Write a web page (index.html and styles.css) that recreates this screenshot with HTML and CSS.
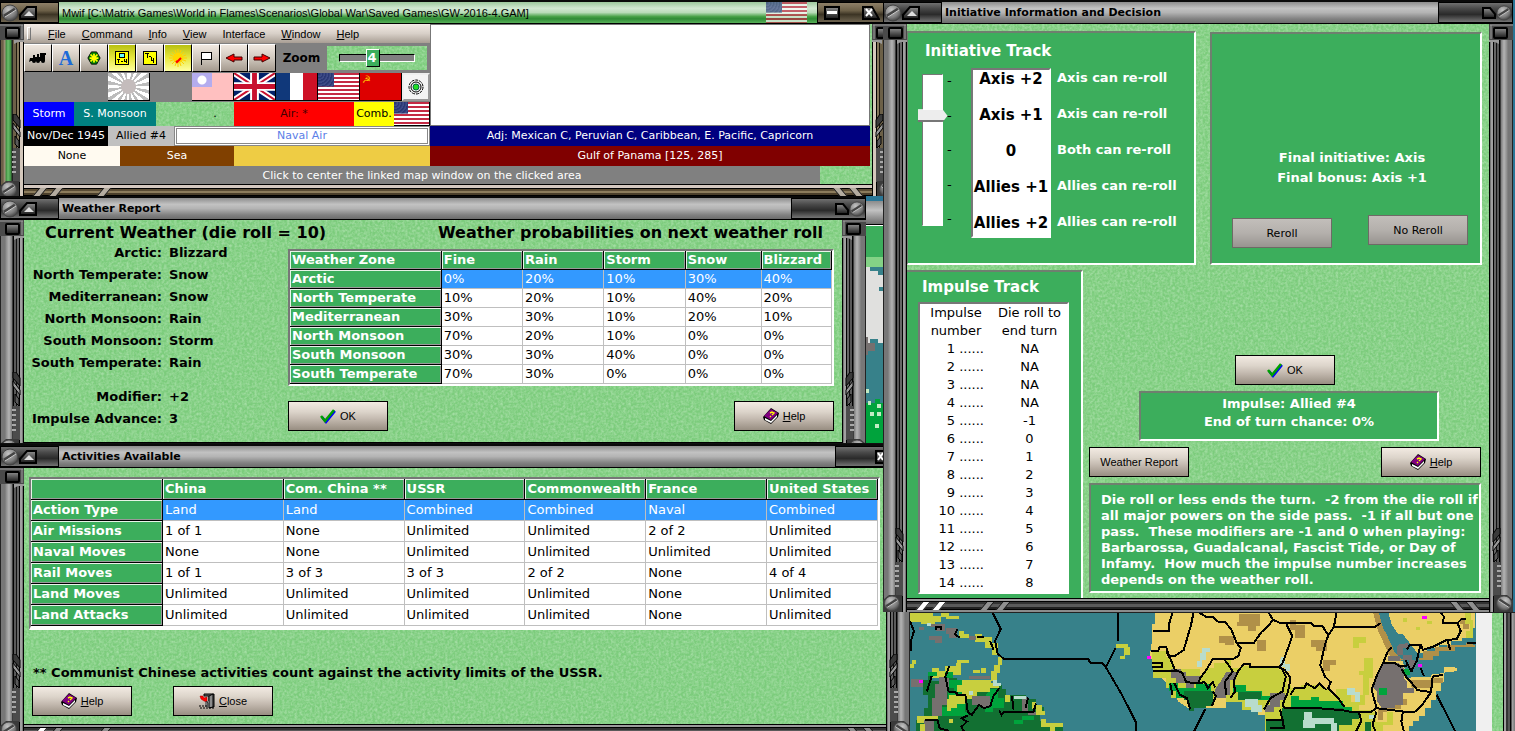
FILE: index.html
```html
<!DOCTYPE html>
<html lang="en">
<head>
    <meta charset="UTF-8">
    <meta name="viewport" content="width=device-width, initial-scale=1.0">
    <title>Mwif</title>
    <link rel="stylesheet" href="styles.css">
</head>
<body>
    <!-- shared shapes -->
    <svg class="defs" width="0" height="0" aria-hidden="true">
        <defs>
            <radialGradient id="screwFill" cx="0.4" cy="0.3" r="0.8">
                <stop offset="0" stop-color="#c4c4c4"/>
                <stop offset="0.6" stop-color="#7c7c7c"/>
                <stop offset="1" stop-color="#2c2c2c"/>
            </radialGradient>
            <linearGradient id="knobFill" x1="0" y1="0" x2="0" y2="1">
                <stop offset="0" stop-color="#909090"/>
                <stop offset="1" stop-color="#181818"/>
            </linearGradient>
        </defs>
        <symbol id="screw" viewBox="0 0 18 18">
            <circle cx="9" cy="9" r="8" fill="url(#screwFill)" stroke="#444"/>
            <path d="M3 12 L14 5" stroke="#444" stroke-width="3"/>
            <path d="M4 13 L15 6" stroke="#ccc" stroke-width="1"/>
        </symbol>
        <symbol id="tri" viewBox="0 0 18 14">
            <path d="M1 13 V9 L8 1 H17 V13 Z" fill="url(#knobFill)" stroke="#000" stroke-width="2"/>
            <path d="M5 10 L10 5 L15 10 Z" fill="#ddd"/>
        </symbol>
        <symbol id="railtop" viewBox="0 0 24 20">
            <rect width="24" height="16" fill="#4a4a4a"/>
            <path d="M0 1 H23 M22 1 V15" stroke="#a0a0a0" stroke-width="1"/>
            <rect x="6" y="4" width="13" height="10" rx="1" fill="url(#knobFill)" stroke="#000" stroke-width="2"/>
            <path d="M14 16 H24 V18 H18 L14 20 Z" fill="#9a9a9a"/>
        </symbol>
        <symbol id="railend" viewBox="0 0 24 84">
            <path d="M13 0 L16 0 L20 6 V14 L13 6 Z" fill="#3a3a3a" stroke="#000"/>
            <path d="M13 9 L20 18 V23 L13 14 Z" fill="#989898" stroke="#000"/>
            <path d="M15 22 L19 27 V34 L15 30 Z" fill="#5a5a5a" stroke="#000"/>
            <rect x="13" y="34" width="7" height="34" fill="#4c4c4c"/>
            <path d="M12 38 H16 M12 43 H16 M12 48 H16 M12 53 H16 M12 58 H16" stroke="#a8a8a8" stroke-width="2"/>
            <path d="M6 67 H19 V84 H0 V72 Z" fill="#3a3a3a"/>
            <use href="#screw" x="0" y="67" width="18" height="17"/>
        </symbol>
        <symbol id="book" viewBox="0 0 16 16">
            <path d="M0 9 L8 0 L16 5 L15 9 L8 16 L1 12 Z" fill="#000"/>
            <path d="M1 8 L8 1 L15 5 L8 12 Z" fill="#800080"/>
            <path d="M2 10 L8 13 L14 7 V9 L8 15 L2 12 Z" fill="#fff"/>
            <path d="M7 5 L9 4 L11 5 L9 7 M8 8 L7 9" stroke="#ff0" stroke-width="1.4" fill="none"/>
        </symbol>
        <symbol id="check" viewBox="0 0 16 16">
            <path d="M2 9 L6 14 L15 3" stroke="#00f" stroke-width="2.4" fill="none"/>
            <path d="M1 8 L5 13 L14 2" stroke="#00a000" stroke-width="2.6" fill="none"/>
        </symbol>
        <symbol id="door" viewBox="0 0 16 16">
            <path d="M5 1 H15 V14 H10 V3 H5 Z" fill="#666" stroke="#000"/>
            <path d="M10 3 L14 1 V14 L10 15 Z" fill="#8c8c8c" stroke="#000"/>
            <path d="M6 8 H10 V14 H6 Z" fill="#777"/>
            <path d="M1 3 L4 3 L5 5 L8 4 L8 9 L5 8 L2 6 Z" fill="#f00" stroke="#900" stroke-width="0.5"/>
            <path d="M7 8 L9 10 V14" stroke="#333" fill="none"/>
            <path d="M0 13 H9 M1 15 H16" stroke="#000" stroke-dasharray="2 1"/>
        </symbol>
    </svg>

    <main class="desktop">
        <div class="left-side">

            <!-- main game window -->
            <section class="window mwif">
                <header class="titlebar">
                    <div class="title-left">
                        <svg width="18" height="18"><use href="#screw"/></svg>
                        <svg width="18" height="14"><use href="#tri"/></svg>
                    </div>
                    <h1>Mwif [C:\Matrix Games\World in Flames\Scenarios\Global War\Saved Games\GW-2016-4.GAM]</h1>
                    <span class="flag us title-flag"></span>
                    <div class="title-right main-buttons">
                        <button class="knob" aria-label="Minimize"><svg width="16" height="14" viewBox="0 0 16 14"><rect x="1" y="1" width="14" height="12" fill="url(#knobFill)" stroke="#000" stroke-width="2"/><rect x="3" y="5" width="10" height="3" fill="#fff"/></svg></button>
                        <button class="knob" aria-label="Close"><svg width="18" height="14" viewBox="0 0 18 14"><path d="M1 1 H10 L17 13 H1 Z" fill="url(#knobFill)" stroke="#000" stroke-width="2"/><path d="M4 3 L10 10 M10 3 L4 10" stroke="#fff" stroke-width="2"/></svg></button>
                    </div>
                </header>
                <div class="window-body">
                    <div class="rail"><svg width="24" height="20"><use href="#railtop"/></svg><svg width="24" height="84"><use href="#railend"/></svg></div>
                    <div class="middle">
                        <div class="content">
                            <div class="top-area">
                                <div class="controls">
                                    <nav class="menu">
                                        <span class="grip"></span>
                                        <a href="#"><u>F</u>ile</a>
                                        <a href="#"><u>C</u>ommand</a>
                                        <a href="#"><u>I</u>nfo</a>
                                        <a href="#"><u>V</u>iew</a>
                                        <a href="#">Interface</a>
                                        <a href="#"><u>W</u>indow</a>
                                        <a href="#"><u>H</u>elp</a>
                                    </nav>
                                    <div class="toolbar">
                                        <button class="tool" aria-label="Rail"><svg width="18" height="16" viewBox="0 0 18 16"><path d="M1 8 H4 V5 H6 V7 H8 V4 H10 V7 H11 V3 H17 V5 H16 V11 H2 L0 12 Z"/><circle cx="5" cy="11" r="2"/><circle cx="9" cy="11" r="2"/><circle cx="14" cy="11" r="2"/></svg></button>
                                        <button class="tool letter" aria-label="Names">A</button>
                                        <button class="tool" aria-label="Hexes"><svg width="14" height="14" viewBox="0 0 16 16"><path d="M5 1 H11 L15 8 L11 15 H5 L1 8 Z" fill="#008000" stroke="#000"/><path d="M8 3 V13 M3 8 H13 M4 4 L12 12 M12 4 L4 12" stroke="#ff0" stroke-width="2"/></svg></button>
                                        <button class="tool on" aria-label="Unit numbers"><svg width="14" height="14" viewBox="0 0 14 14" shape-rendering="crispEdges"><rect x="0" y="0" width="14" height="14" fill="#000"/><rect x="1" y="1" width="12" height="12" fill="#ff0"/><rect x="4" y="2" width="6" height="5" fill="#000"/><rect x="5" y="3" width="4" height="3" fill="#6ff"/><path d="M2 8 H5 V9 H4 V12 H3 V9 H2 Z M6 10 H8 V11 H6 Z M9 8 H10 V10 H11 V8 H12 V12 H11 V11 H9 Z"/></svg></button>
                                        <button class="tool" aria-label="Factors"><svg width="14" height="14" viewBox="0 0 14 14" shape-rendering="crispEdges"><rect width="14" height="14" fill="#000"/><rect x="1" y="1" width="12" height="12" fill="#ff0"/><path d="M2 2 H6 V3 H5 V7 H4 V3 H2 Z M6 5 H8 V6 H6 Z M8 6 H9 V9 H10 V7 H11 V12 H10 V10 H8 Z"/></svg></button>
                                        <button class="tool on" aria-label="Weather"><svg width="20" height="20" viewBox="0 0 20 20"><path d="M10 1 V19 M1 10 H19 M4 4 L16 16 M16 4 L4 16 M7 2 L13 18 M13 2 L7 18 M2 7 L18 13 M18 7 L2 13" stroke="#ffd000"/><circle cx="10" cy="10" r="5" fill="#ffd800"/><path d="M8 13 L9 14 L13 10" stroke="#f00" stroke-width="2" fill="none"/></svg></button>
                                        <button class="tool" aria-label="Flag"><svg width="16" height="16" viewBox="0 0 16 16" shape-rendering="crispEdges"><path d="M3 15 V2 H13 V9 H3" fill="#fff" stroke="#000"/></svg></button>
                                        <button class="tool" aria-label="Back"><svg width="18" height="12" viewBox="0 0 18 12"><path d="M1 6 L9 2 V5 H17 V8 H9 V10 Z" fill="#f00" stroke="#400"/></svg></button>
                                        <button class="tool" aria-label="Forward"><svg width="18" height="12" viewBox="0 0 18 12"><path d="M17 6 L9 2 V5 H1 V8 H9 V10 Z" fill="#f00" stroke="#400"/></svg></button>
                                        <label class="zoom-label" for="zoom">Zoom</label>
                                        <div class="zoom-box">
                                            <input type="range" id="zoom" class="zoom" min="1" max="8" value="4">
                                            <output class="zoom-value" for="zoom">4</output>
                                        </div>
                                    </div>
                                    <div class="flags">
                                        <span></span>
                                        <span></span>
                                        <span class="flag japan"></span>
                                        <span></span>
                                        <span class="flag china"></span>
                                        <svg class="flag" viewBox="0 0 42 28" preserveAspectRatio="none">
                                            <rect width="42" height="28" fill="#012169"/>
                                            <path d="M0 0 L42 28 M42 0 L0 28" stroke="#fff" stroke-width="6"/>
                                            <path d="M0 0 L42 28 M42 0 L0 28" stroke="#c8102e" stroke-width="2"/>
                                            <path d="M21 0 V28 M0 14 H42" stroke="#fff" stroke-width="9"/>
                                            <path d="M21 0 V28 M0 14 H42" stroke="#c8102e" stroke-width="5"/>
                                        </svg>
                                        <span class="flag france"></span>
                                        <span class="flag us"></span>
                                        <span class="flag ussr">☭</span>
                                        <button class="target" aria-label="Target"><svg width="18" height="18" viewBox="0 0 18 18" fill="none" stroke="#000"><circle cx="9" cy="9" r="7" stroke-dasharray="3 1"/><circle cx="9" cy="9" r="5"/><circle cx="9" cy="9" r="3" fill="#2d2" stroke="#064"/></svg></button>
                                    </div>
                                    <div class="info-row tall">
                                        <span class="storm">Storm</span>
                                        <span class="monsoon">S. Monsoon</span>
                                        <span class="dot">.</span>
                                        <span class="air">Air: *</span>
                                        <span class="comb">Comb.</span>
                                        <span class="flag us small"></span>
                                    </div>
                                </div>
                                <div class="overview"></div>
                            </div>
                            <div class="info-row">
                                <div class="info-left">
                                    <span class="date">Nov/Dec 1945</span>
                                    <span class="side">Allied #4</span>
                                    <input class="phase" type="text" value="Naval Air" aria-label="Phase" readonly>
                                </div>
                                <span class="adjacent">Adj: Mexican C, Peruvian C, Caribbean, E. Pacific, Capricorn</span>
                            </div>
                            <div class="info-row">
                                <div class="info-left">
                                    <span class="none">None</span>
                                    <span class="sea">Sea</span>
                                    <span class="sand"></span>
                                </div>
                                <span class="place">Gulf of Panama [125, 285]</span>
                            </div>
                            <div class="status">Click to center the linked map window on the clicked area</div>
                        </div>
                        <div class="bottom-bar"><i></i><i></i><i></i><i class="end"></i><i></i></div>
                    </div>
                    <div class="rail right"><svg width="24" height="20"><use href="#railtop"/></svg><svg width="24" height="84"><use href="#railend"/></svg></div>
                </div>
            </section>

            <!-- weather report -->
            <div class="weather-row">
                <section class="window weather">
                    <header class="titlebar">
                        <div class="title-left">
                            <svg width="18" height="18"><use href="#screw"/></svg>
                            <svg width="18" height="14"><use href="#tri"/></svg>
                        </div>
                        <h2>Weather Report</h2>
                        <div class="title-right">
                            <svg width="14" height="12" viewBox="0 0 14 12"><path d="M1 1 H8 L13 7 V11 H1 Z" fill="url(#knobFill)" stroke="#000" stroke-width="2"/></svg>
                            <svg width="16" height="16"><use href="#screw"/></svg>
                        </div>
                    </header>
                    <div class="window-body">
                        <div class="rail"><svg width="24" height="20"><use href="#railtop"/></svg><svg width="24" height="84"><use href="#railend"/></svg></div>
                        <div class="middle">
                            <div class="content weather-content">
                                <div class="current">
                                    <h3>Current Weather (die roll = 10)</h3>
                                    <dl>
                                        <dt>Arctic:</dt><dd>Blizzard</dd>
                                        <dt>North Temperate:</dt><dd>Snow</dd>
                                        <dt>Mediterranean:</dt><dd>Snow</dd>
                                        <dt>North Monsoon:</dt><dd>Rain</dd>
                                        <dt>South Monsoon:</dt><dd>Storm</dd>
                                        <dt>South Temperate:</dt><dd>Rain</dd>
                                    </dl>
                                    <dl>
                                        <dt>Modifier:</dt><dd>+2</dd>
                                        <dt>Impulse Advance:</dt><dd>3</dd>
                                    </dl>
                                </div>
                                <div class="probabilities">
                                    <h3>Weather probabilities on next weather roll</h3>
                                    <table class="grid-table weather-table">
                                        <thead>
                                            <tr><th class="zone">Weather Zone</th><th class="wide">Fine</th><th class="wide">Rain</th><th class="wide">Storm</th><th class="medium">Snow</th><th>Blizzard</th></tr>
                                        </thead>
                                        <tbody>
                                            <tr class="selected"><th>Arctic</th><td>0%</td><td>20%</td><td>10%</td><td>30%</td><td>40%</td></tr>
                                            <tr><th>North Temperate</th><td>10%</td><td>20%</td><td>10%</td><td>40%</td><td>20%</td></tr>
                                            <tr><th>Mediterranean</th><td>30%</td><td>30%</td><td>10%</td><td>20%</td><td>10%</td></tr>
                                            <tr><th>North Monsoon</th><td>70%</td><td>20%</td><td>10%</td><td>0%</td><td>0%</td></tr>
                                            <tr><th>South Monsoon</th><td>30%</td><td>30%</td><td>40%</td><td>0%</td><td>0%</td></tr>
                                            <tr><th>South Temperate</th><td>70%</td><td>30%</td><td>0%</td><td>0%</td><td>0%</td></tr>
                                        </tbody>
                                    </table>
                                    <div class="button-row">
                                        <button class="btn"><svg width="16" height="16"><use href="#check"/></svg>OK</button>
                                        <button class="btn"><svg width="16" height="16"><use href="#book"/></svg><span><u>H</u>elp</span></button>
                                    </div>
                                </div>
                            </div>
                            <div class="bottom-bar"><i></i><i></i><i></i><i class="end"></i><i></i></div>
                        </div>
                        <div class="rail right"><svg width="24" height="20"><use href="#railtop"/></svg><svg width="24" height="84"><use href="#railend"/></svg></div>
                    </div>
                </section>
                <div class="behind">
                    <div class="behind-title"></div>
                    <div class="behind-panel"></div>
                    <svg class="behind-map" viewBox="0 0 17 176" preserveAspectRatio="none" shape-rendering="crispEdges">
                        <rect width="17" height="176" fill="#37818a"/>
                        <path d="M0 0 H4 V4 H12 V8 H17 V76 H12 V72 H4 V76 H0 Z" fill="#e0e0de"/>
                        <path d="M13 20 H17 V24 H13 Z" fill="#37818a"/>
                        <path d="M0 70 H2 V76 H9 V84 H2 V88 H0 Z" fill="#76706f"/>
                        <path d="M0 136 H9 V132 H14 V136 H17 V176 H0 Z" fill="#00a33c"/>
                        <path d="M0 122 H3 V126 H0 Z M2 134 H5 V138 H2 Z M4 145 H8 V149 H4 Z M11 137 H15 V141 H11 Z M11 145 H15 V149 H11 Z M9 157 H13 V161 H9 Z" fill="#c4ecc4"/>
                    </svg>
                </div>
            </div>

            <!-- activities -->
            <section class="window activities">
                <header class="titlebar">
                    <div class="title-left">
                        <svg width="18" height="18"><use href="#screw"/></svg>
                        <svg width="18" height="14"><use href="#tri"/></svg>
                    </div>
                    <h2>Activities Available</h2>
                    <div class="title-right act-buttons">
                        <button class="knob" aria-label="Close"><svg width="18" height="14" viewBox="0 0 18 14"><path d="M1 1 H10 L17 13 H1 Z" fill="url(#knobFill)" stroke="#000" stroke-width="2"/><path d="M3 3 L8 10 M8 3 L3 10" stroke="#fff" stroke-width="2"/></svg></button>
                    </div>
                </header>
                <div class="window-body">
                    <div class="rail"><svg width="24" height="20"><use href="#railtop"/></svg><svg width="24" height="84"><use href="#railend"/></svg></div>
                    <div class="middle">
                        <div class="content activities-content">
                            <table class="grid-table activities-table">
                                <thead>
                                    <tr><th class="zone"></th><th>China</th><th>Com. China **</th><th>USSR</th><th>Commonwealth</th><th>France</th><th class="last">United States</th></tr>
                                </thead>
                                <tbody>
                                    <tr class="selected"><th>Action Type</th><td>Land</td><td>Land</td><td>Combined</td><td>Combined</td><td>Naval</td><td>Combined</td></tr>
                                    <tr><th>Air Missions</th><td>1 of 1</td><td>None</td><td>Unlimited</td><td>Unlimited</td><td>2 of 2</td><td>Unlimited</td></tr>
                                    <tr><th>Naval Moves</th><td>None</td><td>None</td><td>Unlimited</td><td>Unlimited</td><td>Unlimited</td><td>Unlimited</td></tr>
                                    <tr><th>Rail Moves</th><td>1 of 1</td><td>3 of 3</td><td>3 of 3</td><td>2 of 2</td><td>None</td><td>4 of 4</td></tr>
                                    <tr><th>Land Moves</th><td>Unlimited</td><td>Unlimited</td><td>Unlimited</td><td>Unlimited</td><td>None</td><td>Unlimited</td></tr>
                                    <tr><th>Land Attacks</th><td>Unlimited</td><td>Unlimited</td><td>Unlimited</td><td>Unlimited</td><td>None</td><td>Unlimited</td></tr>
                                </tbody>
                            </table>
                            <p class="note">** Communist Chinese activities count against the activity limits of the USSR.</p>
                            <div class="button-row">
                                <button class="btn"><svg width="16" height="16"><use href="#book"/></svg><span><u>H</u>elp</span></button>
                                <button class="btn"><svg width="16" height="16"><use href="#door"/></svg><span><u>C</u>lose</span></button>
                            </div>
                        </div>
                        <div class="bottom-bar"><i class="white"></i><i></i><i></i><i class="end"></i><i></i></div>
                    </div>
                    <div class="rail right"><svg width="24" height="20"><use href="#railtop"/></svg><svg width="24" height="84"><use href="#railend"/></svg></div>
                </div>
            </section>
        </div>

        <div class="right-side">
            <!-- initiative -->
            <section class="window initiative">
                <header class="titlebar">
                    <div class="title-left">
                        <svg width="18" height="18"><use href="#screw"/></svg>
                        <svg width="18" height="14"><use href="#tri"/></svg>
                    </div>
                    <h2>Initiative Information and Decision</h2>
                    <div class="title-right">
                        <svg width="14" height="12" viewBox="0 0 14 12"><path d="M1 1 H8 L13 7 V11 H1 Z" fill="url(#knobFill)" stroke="#000" stroke-width="2"/></svg>
                        <svg width="16" height="16"><use href="#screw"/></svg>
                    </div>
                </header>
                <div class="window-body">
                    <div class="rail"><svg width="24" height="20"><use href="#railtop"/></svg><svg width="24" height="84"><use href="#railend"/></svg></div>
                    <div class="middle">
                        <div class="content initiative-content">
                            <div class="tracks">
                                <div class="panel initiative-track">
                                    <h3><label for="initiative">Initiative Track</label></h3>
                                    <div class="track">
                                        <input type="range" id="initiative" class="initiative-slider" min="0" max="4" value="1">
                                        <div class="ticks"><span>-</span><span>-</span><span>-</span><span>-</span><span>-</span></div>
                                        <ul class="levels">
                                            <li>Axis +2</li>
                                            <li>Axis +1</li>
                                            <li>0</li>
                                            <li>Allies +1</li>
                                            <li>Allies +2</li>
                                        </ul>
                                        <ul class="meanings">
                                            <li>Axis can re-roll</li>
                                            <li>Axis can re-roll</li>
                                            <li>Both can re-roll</li>
                                            <li>Allies can re-roll</li>
                                            <li>Allies can re-roll</li>
                                        </ul>
                                    </div>
                                </div>
                                <div class="panel final">
                                    <p>Final initiative: Axis<br>Final bonus: Axis +1</p>
                                    <div class="reroll-row">
                                        <button class="btn off" disabled>Reroll</button>
                                        <button class="btn off" disabled>No Reroll</button>
                                    </div>
                                </div>
                            </div>
                            <div class="lower">
                                <div class="panel impulse-track">
                                    <h3>Impulse Track</h3>
                                    <table class="impulses">
                                        <thead>
                                            <tr><th>Impulse<br>number</th><th>Die roll to<br>end turn</th></tr>
                                        </thead>
                                        <tbody>
                                            <tr><td>1 ......</td><td>NA</td></tr>
                                            <tr><td>2 ......</td><td>NA</td></tr>
                                            <tr><td>3 ......</td><td>NA</td></tr>
                                            <tr><td>4 ......</td><td>NA</td></tr>
                                            <tr><td>5 ......</td><td>-1</td></tr>
                                            <tr><td>6 ......</td><td>0</td></tr>
                                            <tr><td>7 ......</td><td>1</td></tr>
                                            <tr><td>8 ......</td><td>2</td></tr>
                                            <tr><td>9 ......</td><td>3</td></tr>
                                            <tr><td>10 ......</td><td>4</td></tr>
                                            <tr><td>11 ......</td><td>5</td></tr>
                                            <tr><td>12 ......</td><td>6</td></tr>
                                            <tr><td>13 ......</td><td>7</td></tr>
                                            <tr><td>14 ......</td><td>8</td></tr>
                                        </tbody>
                                    </table>
                                </div>
                                <div class="decision">
                                    <button class="btn"><svg width="16" height="16"><use href="#check"/></svg>OK</button>
                                    <div class="panel chance">Impulse: Allied #4<br>End of turn chance: 0%</div>
                                    <div class="button-row">
                                        <button class="btn">Weather Report</button>
                                        <button class="btn"><svg width="16" height="16"><use href="#book"/></svg><span><u>H</u>elp</span></button>
                                    </div>
                                    <p class="panel rules">Die roll or less ends the turn.  -2 from the die roll if
all major powers on the side pass.  -1 if all but one
pass.  These modifiers are -1 and 0 when playing:
Barbarossa, Guadalcanal, Fascist Tide, or Day of
Infamy.  How much the impulse number increases
depends on the weather roll.</p>
                                </div>
                            </div>
                        </div>
                        <div class="bottom-bar"><i class="white"></i><i class="white"></i><i></i><i></i><i class="end"></i><i></i></div>
                    </div>
                    <div class="rail right"><svg width="24" height="20"><use href="#railtop"/></svg><svg width="24" height="84"><use href="#railend"/></svg></div>
                </div>
            </section>

            <!-- world map behind the windows -->
            <div class="map-row">
                <svg class="map" viewBox="62 56 1410 352" preserveAspectRatio="none" shape-rendering="crispEdges">
                    <rect x="62" y="56" width="1410" height="352" fill="#37818a"/>
                    <!-- caribbean and south america -->
                    <path fill="#c8cf3e" d="M62 56 H120 V64 H138 V82 H124 V90 H90 V84 H62 Z M140 56 H160 V64 H184 V74 H152 V68 H140 Z M184 110 H196 V120 H208 V132 H184 Z M225 120 H242 V128 H266 V146 H280 V180 H266 V160 H250 V142 H225 Z M66 196 H78 V208 H72 V220 H62 V208 H66 Z M280 186 H292 V210 H286 V236 H278 V260 H264 V230 H272 V210 H280 Z M180 196 H210 V206 H180 Z M118 220 H134 V230 H150 V214 H176 V206 H190 V240 H160 V250 H112 V232 H118 Z M218 226 H236 V236 H218 Z M238 220 H252 V236 H238 Z"/>
                    <path fill="#76706f" d="M84 98 H96 V108 H84 Z M112 88 H148 V110 H126 V98 H112 Z M152 100 H180 V130 H160 V120 H152 Z M110 124 H142 V146 H124 V136 H110 Z M208 124 H226 V136 H208 Z M64 254 H94 V276 H64 Z"/>
                    <path fill="#127032" d="M94 256 H106 V244 H118 V260 H150 V250 H180 V262 H262 V270 H292 V282 H300 V302 H350 V312 H376 V336 H396 V360 H386 V378 H402 V390 H444 V408 H76 V376 H96 V340 H106 V300 H94 Z"/>
                    <path fill="#76706f" d="M134 246 H160 V290 H154 V330 H142 V362 H116 V310 H124 V268 H134 Z M96 372 H122 V408 H100 V390 H96 Z M216 304 H262 V336 H240 V330 H216 Z M340 308 H356 V348 H340 Z M356 350 H382 V360 H356 Z M210 244 H262 V254 H210 Z"/>
                    <path fill="#00a33c" d="M106 232 H130 V244 H106 Z M150 232 H170 V250 H150 Z M160 256 H180 V268 H230 V282 H206 V300 H200 V350 H206 V362 H142 V336 H156 V296 H172 V280 H160 Z M260 284 H280 V310 H296 V340 H270 V350 H250 V338 H262 V304 H250 Z M320 374 H340 V362 H370 V374 H344 V386 H320 Z M180 256 H192 V270 H180 Z"/>
                    <path fill="#c8cf3e" d="M192 256 H264 V266 H284 V280 H262 V292 H230 V304 H216 V312 H192 V292 H180 V270 H192 Z M160 302 H200 V326 H180 V340 H164 V348 H154 V314 H160 Z M366 320 H376 V330 H390 V348 H398 V360 H376 V342 H366 Z M388 372 H402 V384 H444 V396 H424 V408 H410 V396 H388 Z M80 364 H132 V374 H96 V384 H80 Z M86 388 H100 V408 H86 Z M298 302 H310 V320 H298 Z M160 372 H170 V384 H160 Z"/>
                    <path fill="#b8dccc" d="M268 256 H278 V266 H288 V274 H268 Z M320 304 H350 V314 H320 Z M104 86 H114 V96 H104 Z M208 290 H220 V300 H208 Z"/>
                    <path fill="#c8cf3e" d="M574 148 H604 V158 H610 V180 H598 V194 H584 V184 H596 V160 H574 Z"/>
                    <!-- africa and arabia -->
                    <path fill="#ebcf66" d="M672 56 H1216 L1228 90 L1240 130 L1254 166 L1262 190 L1290 200 L1300 250 L1420 230 V218 H1392 V262 H1384 V290 H1372 V316 H1360 V340 H1344 V364 H1330 V378 H1316 V394 H1304 V408 H954 V360 H930 V330 H890 V316 H850 V340 H796 V336 H760 V344 L730 320 L712 280 L690 250 L668 246 V210 L660 180 L666 130 V90 H672 Z"/>
                    <path fill="#ebcf66" d="M1252 56 H1470 V130 H1436 V140 H1410 V150 H1380 V160 H1350 V176 H1326 L1310 150 L1290 120 L1268 116 L1260 90 Z"/>
                    <path fill="#b09048" d="M882 60 H934 V96 H924 V110 H904 V96 H876 V82 H882 Z M1010 76 H1024 V92 H1046 V132 H1020 V108 H1008 Z M832 124 H868 V152 H846 V144 H832 Z M926 136 H950 V168 H926 Z M1060 138 H1100 V170 H1074 V156 H1060 Z M1092 196 H1124 V212 H1108 V230 H1092 Z M1216 56 H1230 L1240 100 L1254 130 L1268 170 L1290 196 L1276 200 L1256 182 L1240 140 L1228 110 Z M1446 146 H1470 V158 H1420 V170 H1380 V184 H1366 V196 H1346 V210 H1330 V190 H1340 V170 H1370 V158 H1400 V150 H1446 Z M1306 256 H1360 V250 H1390 V264 H1360 V280 H1312 Z M1270 312 H1300 V330 H1284 V342 H1250 V350 H1240 V374 H1228 V340 H1270 Z M1432 70 H1454 V104 H1440 V90 H1432 Z"/>
                    <path fill="#c8cf3e" d="M664 170 H700 V186 H710 V206 H720 V224 H784 V240 H796 V220 H820 V206 H846 V196 H862 V220 H890 V214 H980 V226 H1000 V250 H1012 V280 H1036 V270 H1090 V284 H1112 V300 H1122 V322 H1140 V346 H1212 V350 H1224 V408 H946 V344 H890 V320 H850 V310 H810 V280 H770 V300 H730 V310 H712 V280 H700 V250 H668 Z M1166 128 H1198 V146 H1180 V160 H1166 Z M1194 190 H1216 V250 H1206 V300 H1196 V330 H1180 V300 H1190 V240 H1180 V230 H1194 Z"/>
                    <path fill="#c8cf3e" d="M1124 284 H1150 V300 H1160 V320 H1180 V350 H1140 V320 H1124 Z M1220 380 H1250 V350 H1266 V390 H1240 V408 H1220 Z"/>
                    <path fill="#00a33c" d="M706 266 H730 V280 H774 V268 H812 V290 H790 V296 H770 V310 H724 V290 H706 Z M866 270 H900 V290 H938 V304 H960 V316 H880 V292 H866 Z M1010 304 H1030 V316 H1060 V306 H1080 V318 H1140 V336 H1164 V380 H1140 V350 H996 V340 H1010 Z M1286 222 H1310 V240 H1286 Z"/>
                    <path fill="#127032" d="M744 290 H816 V332 H800 V338 H770 V348 H756 V316 H744 Z M880 292 H936 V312 H900 V316 H880 Z M988 340 H1140 V350 H1164 V390 H1130 V408 H950 V374 H988 Z M1156 352 H1180 V372 H1156 Z M1196 382 H1210 V408 H1196 Z"/>
                    <path fill="#76706f" d="M712 224 H738 V232 H750 V244 H784 V262 H770 V280 H750 V266 H724 V250 H712 Z M836 260 L850 232 H874 V256 H860 V300 H850 V310 H822 V284 Z M958 294 H996 V316 H984 V336 H970 V350 H946 V330 H958 Z M1240 206 H1280 L1292 220 V250 L1300 262 V280 H1318 V296 H1290 V330 H1270 V338 H1236 L1226 320 V290 L1216 280 L1228 240 Z M1252 184 H1282 V200 H1252 Z M1274 146 H1302 V160 H1290 V180 H1312 V196 H1330 V220 H1306 V196 H1290 V180 H1274 Z"/>
                    <path fill="#00a33c" d="M1230 280 H1250 V300 H1230 Z"/>
                    <path fill="#b8dccc" d="M790 160 H810 V172 H800 V196 H790 V218 H776 V200 H784 V176 H790 Z M986 186 H996 V208 H1008 V230 H996 V216 H982 Z M1150 280 H1170 V292 H1184 V320 H1170 V300 H1150 Z M896 314 H930 V330 H940 V350 H912 V336 H896 Z M1044 350 H1064 V370 H1118 V384 H1126 V408 H1110 V386 H1070 V400 H1040 V374 H1044 Z M1206 360 H1220 V372 H1206 Z"/>
                    <path fill="#37818a" d="M1234 56 H1254 L1262 90 L1276 116 L1296 130 L1302 146 L1280 150 L1270 164 L1254 134 L1246 100 Z M1306 226 H1360 V246 H1310 Z M1320 196 H1350 V230 H1320 Z M1464 100 H1472 V150 H1464 Z"/>
                    <path fill="#c8cf3e" d="M1444 56 H1460 V76 H1464 V130 H1446 V110 H1456 V90 H1444 Z M1350 80 H1362 V90 H1350 Z M1322 98 H1332 V108 H1322 Z M1290 70 H1300 V84 H1290 Z"/>
                    <path fill="#37818a" d="M1394 232 H1426 V200 H1472 V408 H1306 V396 H1318 V380 H1332 V366 H1346 V342 H1362 V318 H1374 V292 H1386 V264 H1394 Z"/>
                    <path fill="#ebcf66" d="M1392 220 H1424 V230 H1392 Z M1000 260 H1012 V270 H1000 Z"/>
                    <!-- borders -->
                    <g class="borders" fill="none" stroke="#000" stroke-width="2">
                        <path d="M268 56 L288 104 L274 140 L280 176 L296 194 H506 L512 206 H540 L550 218 L574 160"/>
                        <path d="M580 56 V140 M550 218 L590 300 L624 380 V408 M798 342 L770 408 M62 80 L72 110 L64 140 V170"/>
                        <path d="M180 104 L174 120 L186 130 M230 128 H246 M262 140 L270 166 M126 106 V98 H140 V106"/>
                        <path d="M160 214 L150 246 L158 290 L180 294 V302 H200 L206 352 L216 360 L234 330 L246 340 L262 334 L270 304 L284 280 M284 346 L290 360 L296 350 H370 L376 326 M316 304 L320 344 M356 308 L350 340 M116 244 L104 290 M100 374 H130 L136 400 L160 408 M206 362 L190 370 L204 380 L190 396 L196 408"/>
                        <path d="M716 56 L708 86 V110 H668 M768 56 L762 92 L744 166 L722 184 H708 L700 158 H684 L680 170 H662"/>
                        <path d="M784 56 L800 68 H816 L830 82 H846 L862 104 L876 146 H918 L938 112 L954 96 L966 76 L956 56"/>
                        <path d="M966 76 L984 86 H1060 L1070 96 H1090 L1104 122 L1096 150 L1084 212 L1096 246 L1110 262 L1104 280 L1126 306 L1144 336"/>
                        <path d="M1124 56 L1118 98 L1104 122 M1118 98 H1220 L1234 86 M1000 90 L1014 124 L1004 160 L990 206 L980 218 H910 V208 H894 L880 228 L868 260 L872 290 L860 310"/>
                        <path d="M876 146 L886 160 L880 184 L866 194 H816 L798 230 L786 248 L780 266 M846 196 L856 212 L866 230 L846 262 L850 300 M664 206 H690 V218 H666 M700 170 L712 196 L722 226 L740 234 L750 262 L780 266 L796 262 L804 280 L816 262 L822 278"/>
                        <path d="M668 230 H730 M710 266 L716 300 M720 264 L734 300 L752 310 L760 344 M816 290 L824 304 L814 334 M980 218 L996 226 L1010 250 L1004 290 L990 330 L996 340 H1080 L1140 346 L1156 350 H1212 L1224 340 L1290 350 H1320 L1338 330 L1360 292"/>
                        <path d="M988 220 L998 246 L990 290 L960 310 L944 344 M1010 300 L1020 280 H1044 L1050 266 L1070 280 L1082 266 L1100 286 M1240 206 L1226 240 L1212 284 L1222 330 L1224 340 M1240 206 H1270 L1284 216 L1302 212 M1240 206 L1252 172 L1262 158"/>
                        <path d="M1286 222 L1300 250 L1310 262 L1326 286 L1360 292 L1364 246 L1390 240 M1296 196 L1312 232 M1334 150 L1324 200 L1310 230 M1300 164 L1308 150 H1334 L1340 166 L1366 156 L1400 136 L1424 134 L1434 110 L1426 86 H1390 L1392 66 L1384 56"/>
                        <path d="M1426 86 L1436 74 H1448 M1400 136 L1408 166 M1450 146 H1471 M1334 220 L1342 244 M1374 300 L1420 408 M1290 350 L1286 380 L1292 408 M1180 350 L1186 378 L1174 408 M1224 350 L1214 390 L1222 408 M950 374 H994 M984 344 L994 400 H960"/>
                    </g>
                    <path fill="#f0f" d="M652 184 H662 V194 H652 Z M84 256 H95 V266 H84 Z M1338 64 H1349 V74 H1338 Z M1328 207 H1338 V218 H1328 Z"/>
                </svg>
                <div class="map-edge"></div>
                <div class="map-grass"></div>
                <div class="map-rail"></div>
            </div>
        </div>
    </main>
</body>
</html>
```
FILE: styles.css
```css
* {
    box-sizing: border-box;
    margin: 0;
    padding: 0;
}

:root {
    --grass: #84d286;
    --panel: #3cae5c;
    --texture: url("data:image/svg+xml,%3Csvg xmlns='http://www.w3.org/2000/svg' width='128' height='128'%3E%3Cfilter id='n' x='0' y='0' width='100%25' height='100%25'%3E%3CfeTurbulence type='fractalNoise' baseFrequency='0.4' numOctaves='2' seed='4' stitchTiles='stitch'/%3E%3CfeColorMatrix values='0 0 0 0 0.7 0 0 0 0 0.92 0 0 0 0 0.7 1.3 0 0 0 -0.42'/%3E%3C/filter%3E%3Crect width='128' height='128' fill='%237ccc7c'/%3E%3Crect width='128' height='128' filter='url(%23n)' opacity='0.6'/%3E%3C/svg%3E");
}

body {
    font-family: "DejaVu Sans", Verdana, sans-serif;
    font-size: 13px;
    color: #000;
    background: #2a7696;
    overflow: hidden;
}

ul {
    list-style: none;
}

.defs {
    position: absolute;
}

.desktop {
    display: grid;
    grid-template-columns: 883fr 632fr;
    grid-template-rows: minmax(0, 1fr);
    height: 100vh;
}

.left-side,
.right-side {
    min-width: 0;
}

/* ---------- window frame ---------- */

.window {
    position: relative;
    background: #111;
}

.titlebar {
    display: flex;
    align-items: center;
    height: 24px;
    border-top: 2px solid #0a0a0a;
    border-bottom: 1px solid #000;
    background: linear-gradient(#8c8c8c, #c2c2c2 30%, #b4b4b4 50%, #828282 80%, #6c6c6c);
}

.titlebar h1,
.titlebar h2 {
    flex: 1;
    padding-left: 3px;
    font-size: 11px;
    line-height: 20px;
    white-space: nowrap;
    overflow: hidden;
}

.title-left,
.title-right {
    display: flex;
    align-items: center;
    flex: none;
    height: 21px;
    border: 1px solid #000;
    background: linear-gradient(#707070, #484848 30%, #2a2a2a 60%, #747474);
}

.title-left {
    width: 59px;
}

.title-right {
    width: 75px;
    justify-content: flex-end;
}

.knob {
    display: flex;
    border: none;
    background: none;
}

.window-body {
    display: flex;
}

.middle {
    flex: 1;
    min-width: 0;
    display: flex;
    flex-direction: column;
}

.content {
    flex: 1;
    background: var(--grass) var(--texture);
}

.rail {
    flex: none;
    width: 24px;
    display: flex;
    flex-direction: column;
    justify-content: space-between;
    background: linear-gradient(90deg, #222 0 1px, #777 1px 5px, #8c8c8c 6px, #b4b4b4 9px, #7a7a7a 12px, #000 13px 14px, #5a5a5a 14px 16px, #111 16px 17px, #666 17px 19px, #000 19px 20px, #a0a0a0 20px 22px, #777 22px 23px, #000 23px);
}

.rail.right {
    transform: scaleX(-1);
}

.bottom-bar {
    display: flex;
    gap: 8px;
    height: 14px;
    padding: 4px 12px 2px;
    background: linear-gradient(#000 0 1px, #9c9c9c 1px 3px, #000 3px 4px, #333 4px 6px, #5a5a5a 6px 9px, #222 9px 11px, #000 11px 12px, #8c8c8c 12px);
}

.bottom-bar i {
    width: 8px;
    transform: skewX(-40deg);
    background: #909090;
    border: solid #000;
    border-width: 0 1px;
}

.bottom-bar i.white {
    background: #fff;
}

.bottom-bar i:nth-child(3) {
    margin-left: 32px;
}

.bottom-bar i.end {
    margin-left: auto;
}

.bottom-bar i.end,
.bottom-bar i.end + i {
    transform: skewX(40deg);
}

/* ---------- common controls ---------- */

.btn {
    display: flex;
    align-items: center;
    justify-content: center;
    gap: 4px;
    width: 100px;
    height: 30px;
    border: 1px solid #000;
    background: linear-gradient(#f2eae2, #dcd4ca 35%, #c4bab0 60%, #988e82);
    font-family: "Liberation Sans", Arial, sans-serif;
    font-size: 11px;
    color: #000;
}

.btn.off {
    border: 1px solid #6e6a66;
    background: linear-gradient(#c2beba, #b4b0ac 50%, #989490);
    font-family: "DejaVu Sans", Verdana, sans-serif;
}

.panel {
    border: 2px solid;
    border-color: #6f7f6f #fff #fff #6f7f6f;
    background: var(--panel);
    color: #fff;
    font-weight: bold;
}

.grid-table {
    width: 100%;
    table-layout: fixed;
    border: 2px solid;
    border-color: #777 #fff #fff #777;
    border-spacing: 0;
    background: #fff;
}

.grid-table th,
.grid-table td {
    padding: 0 2px;
    text-align: left;
    white-space: nowrap;
    border: solid #bfbfbf;
    border-width: 0 1px 1px 0;
}

.grid-table th {
    padding: 0 1px 0 2px;
    border-color: #000;
    background: var(--panel);
    color: #fff;
    box-shadow: inset 1px 1px #e8f4e8, inset -1px -1px #999;
}

.selected td {
    background: #3399ff;
    color: #fff;
}

.button-row {
    display: flex;
    justify-content: space-between;
}

/* ---------- flags ---------- */

.flag {
    border-right: 1px solid #000;
    border-bottom: 1px solid #000;
}

.us {
    background:
        linear-gradient(#28367499, #28367499) 0 0 / 40% 50% no-repeat,
        repeating-radial-gradient(circle at 1px 1px, #2c3a74 0 1px, #5c6aa4 2px 3px) 0 0 / 40% 50% no-repeat,
        repeating-linear-gradient(#c42a44 0 2px, #fff 2px 4px);
}

.japan {
    background:
        radial-gradient(circle, #c4bcbc 0 7px, transparent 8px),
        repeating-conic-gradient(#fff 0 11deg, #bcbcbc 12deg 22deg);
}

.china {
    background:
        radial-gradient(circle at 10px 7px, #fff 0 4px, transparent 5px),
        linear-gradient(#b4acee, #b4acee) 0 0 / 20px 14px no-repeat,
        #ffc0c0;
}

.france {
    background: linear-gradient(90deg, #10387a 33%, #fff 33% 66%, #ce1126 66%);
}

.ussr {
    padding: 1px 2px;
    background: #dd0000;
    color: #ffc000;
    font-size: 10px;
}

/* ---------- main window ---------- */

.mwif {
    margin-right: -13px;
    height: 198px;
}

.mwif .titlebar {
    background: linear-gradient(#9cc89c, #d2e8d2 30%, #b8dcb8 50%, #44a044 70%, #2f8c36 80%, #58b058);
}

.mwif .title-left,
.mwif .title-right {
    background: linear-gradient(#8e8068, #6c6048 40%, #3c3424 60%, #6e6450);
}

.mwif h1 {
    font-family: "Liberation Sans", Arial, sans-serif;
    font-size: 11px;
    font-weight: normal;
}

.title-flag {
    width: 41px;
    height: 21px;
    margin-right: 10px;
    opacity: 0.7;
    border: none;
}

.mwif .main-buttons {
    width: 79px;
    padding: 0 15px 0 6px;
    justify-content: space-between;
}

.mwif .rail {
    background: linear-gradient(90deg, #222 0 1px, #6c6048 1px 3px, #a89c84 5px, #3a8a3c 6px, #6cc06c 8px, #3a8a3c 11px, #222 12px 13px, #6c6048 13px 16px, #1c180f 16px 17px, #84785c 17px 19px, #000 19px 20px, #d4c8bc 20px 23px, #000 23px);
}

.mwif .rail.right {
    background: linear-gradient(90deg, #222 0 1px, #6c6048 1px 12px, #222 12px 13px, #6c6048 13px 16px, #1c180f 16px 17px, #84785c 17px 19px, #000 19px 20px, #d4c8bc 20px 23px, #000 23px);
}

.mwif .bottom-bar {
    background: linear-gradient(#000 0 1px, #d4c8c0 1px 4px, #000 4px 5px, #5a4c34 5px 7px, #8c7c5c 7px 9px, #4a3e2a 9px 11px, #000 11px);
}

.mwif .bottom-bar i {
    background: #b4aca0;
}

.mwif .content {
    padding-right: 2px;
}

.top-area {
    display: flex;
}

.controls,
.info-left {
    flex: none;
    width: 406px;
}

.overview {
    flex: 1;
    background: #fff;
    border: 1px solid #777;
}

.menu {
    display: flex;
    align-items: center;
    height: 19px;
    padding-left: 3px;
    background: linear-gradient(#f2eae4, #d8d0c8 50%, #a89e94);
    font-family: "Liberation Sans", Arial, sans-serif;
    font-size: 11px;
}

.menu a {
    color: #000;
    text-decoration: none;
    margin-right: 16px;
}

.grip {
    width: 4px;
    height: 13px;
    margin-right: 17px;
    border: 1px solid;
    border-color: #fff #777 #777 #fff;
}

.toolbar {
    display: flex;
    align-items: center;
    height: 30px;
    padding: 1px 3px 1px 0;
    background: #808080;
}

.tool {
    display: flex;
    align-items: center;
    justify-content: center;
    flex: none;
    width: 28px;
    height: 28px;
    border: 1px solid;
    border-color: #fff #000 #000 #fff;
    background: linear-gradient(#f0e8e0, #d0c8be 50%, #a49a8e);
}

.tool.on {
    background: linear-gradient(#b8c010, #e8e840 50%, #ffffa0);
}

.letter {
    font: bold 20px "Liberation Serif", serif;
    color: #1c6ad8;
}

.zoom-label {
    flex: 1;
    text-align: center;
    font-size: 12px;
    font-weight: bold;
}

.zoom-box {
    position: relative;
    display: flex;
    align-items: center;
    width: 100px;
    height: 24px;
    padding: 0 12px;
    background: var(--grass) var(--texture);
}

.zoom {
    appearance: none;
    width: 76px;
    height: 18px;
    background: none;
}

.zoom::-webkit-slider-runnable-track {
    height: 8px;
    border: 1px solid;
    border-color: #000 #fff #fff #000;
    background: #808080;
}

.zoom::-webkit-slider-thumb {
    appearance: none;
    width: 14px;
    height: 18px;
    margin-top: -6px;
    border: 1px solid;
    border-color: #fff #000 #000 #fff;
    background: var(--panel);
}

.zoom-value {
    position: absolute;
    left: 38px;
    top: 3px;
    width: 14px;
    line-height: 18px;
    text-align: center;
    font-weight: bold;
    color: #fff;
    pointer-events: none;
}

.flags {
    display: flex;
    height: 29px;
    padding-bottom: 1px;
    background: #808080;
}

.flags > * {
    width: 42px;
    height: 28px;
}

.flags .target {
    display: flex;
    align-items: center;
    justify-content: center;
    width: 28px;
    border: 2px outset #eee;
    background: #f4f4f4;
}

.info-row {
    display: flex;
    height: 20px;
    font-size: 11px;
    line-height: 20px;
    text-align: center;
    color: #fff;
}

.info-row.tall {
    height: 24px;
    line-height: 24px;
}

.info-left {
    display: flex;
}

.storm { width: 50px; background: #0000ff; }
.monsoon { width: 82px; background: #008080; }
.dot { width: 78px; padding-left: 40px; color: #000; }
.air { width: 120px; background: #ff0000; color: #400; }
.comb { width: 40px; background: #ffff00; color: #000; }
.us.small { width: 36px; }
.date { width: 84px; background: #000; white-space: nowrap; }
.side { width: 66px; background: #c0c0c0; color: #000; }
.none { width: 96px; background: #fffaf0; color: #000; }
.sea { width: 114px; background: #804000; }
.sand { flex: 1; background: #eecc44; }

.phase {
    flex: 1;
    min-width: 0;
    border: 3px double #888;
    background: #fff;
    color: #5c80e8;
    font: inherit;
    line-height: 14px;
    text-align: center;
}

.adjacent {
    flex: 1;
    background: #000080;
}

.place {
    flex: 1;
    background: #800000;
}

.status {
    height: 18px;
    margin-right: 50px;
    background: #808080;
    color: #fff;
    font-size: 11px;
    line-height: 20px;
    text-align: center;
}

/* ---------- weather ---------- */

.weather-row {
    display: flex;
    position: relative;
    height: 247px;
    margin-top: -2px;
    overflow: hidden;
}

.weather {
    flex: 1;
    height: 261px;
}

.weather-content {
    display: flex;
    padding-right: 8px;
}

.current {
    width: 264px;
    flex: none;
}

.current h3,
.probabilities h3 {
    font-size: 16px;
    line-height: 26px;
    white-space: nowrap;
}

.current h3 {
    padding-left: 21px;
}

.probabilities {
    flex: 1;
}

.probabilities h3 {
    padding-left: 150px;
}

.current dl {
    display: grid;
    grid-template-columns: 138px 1fr;
    column-gap: 7px;
    margin-bottom: 12px;
    margin-top: -4px;
    font-weight: bold;
    line-height: 22px;
}

.current dl + dl {
    margin-top: 0;
}

.current dt {
    text-align: right;
    white-space: nowrap;
}

.weather-table {
    margin-top: 3px;
    margin-bottom: 15px;
}

.weather-table th,
.weather-table td {
    height: 19px;
    line-height: 18px;
}

.weather-table .zone {
    width: 28%;
}

.weather-table .wide {
    width: 15%;
}

.weather-table .medium {
    width: 14%;
}

.behind {
    width: 17px;
    padding-top: 5px;
    display: flex;
    flex-direction: column;
    background: #2a7696;
}

.behind-title {
    height: 24px;
    background: linear-gradient(#8c8c8c, #c2c2c2 40%, #6c6c6c);
    border-bottom: 1px solid #000;
}

.behind-panel {
    height: 42px;
    border-top: 1px solid #fff;
    border-bottom: 10px solid var(--grass);
    background: var(--panel);
}

.behind-map {
    width: 17px;
    flex: 1;
}

/* ---------- activities ---------- */

.activities {
    margin-right: -27px;
    padding-top: 1px;
}

.act-buttons {
    padding-right: 16px;
}

.activities-content {
    padding: 9px 6px 8px 5px;
}

.activities-table {
    border-bottom-width: 4px;
}

.activities-table th,
.activities-table td {
    height: 21px;
    line-height: 20px;
}

.activities-table .zone {
    width: 132px;
}

.activities-table .last {
    width: 111px;
}

.note {
    margin: 33px 0 3px 4px;
    font-weight: bold;
    line-height: 20px;
}

.activities .button-row {
    justify-content: flex-start;
    gap: 41px;
    padding-left: 3px;
}

/* ---------- initiative ---------- */

.right-side {
    position: relative;
    display: flex;
    flex-direction: column;
}

.initiative {
    z-index: 1;
    margin-right: 2px;
}

.initiative-content {
    padding-top: 7px;
}

.tracks {
    display: flex;
    gap: 14px;
    padding-right: 7px;
    height: 234px;
    margin-bottom: 5px;
}

.initiative-track {
    flex: none;
    width: 289px;
    border-left-width: 1px;
}

.initiative h3 {
    font-size: 15px;
    line-height: 20px;
}

.initiative-track h3 {
    padding: 8px 0 7px 17px;
}

.track {
    display: flex;
    padding-left: 9px;
}

.initiative-slider {
    appearance: none;
    writing-mode: vertical-lr;
    width: 30px;
    height: 152px;
    margin-top: 6px;
    background: none;
}

.initiative-slider::-webkit-slider-runnable-track {
    width: 21px;
    border: 1px solid;
    border-color: #777 #fff #fff #777;
    background: #fff;
}

.initiative-slider::-webkit-slider-thumb {
    appearance: none;
    width: 30px;
    height: 13px;
    margin-left: -5px;
    background: linear-gradient(#fff 0 1px, #ededed 1px 11px, #777 11px);
    clip-path: polygon(0 0, 25px 0, 100% 50%, 25px 100%, 0 100%);
}

.ticks {
    display: flex;
    flex-direction: column;
    justify-content: space-between;
    height: 153px;
    width: 8px;
    margin: 5px 16px 0 0;
    color: #000;
    font-weight: normal;
    line-height: 15px;
}

.levels {
    width: 80px;
    height: 170px;
    border: 2px solid;
    border-color: #777 #fff #fff #777;
    background: #fff;
    color: #000;
    font-size: 15px;
    text-align: center;
    white-space: nowrap;
}

.levels li {
    line-height: 18px;
    margin-bottom: 18px;
}

.meanings {
    padding-left: 6px;
}

.meanings li {
    line-height: 20px;
    margin-bottom: 16px;
}

.final {
    flex: 1;
    margin-top: 1px;
    padding: 114px 12px 0 20px;
    text-align: center;
    line-height: 20px;
}

.final p {
    padding-left: 4px;
}

.reroll-row {
    display: flex;
    justify-content: space-between;
    align-items: flex-end;
    margin-top: 27px;
}

.reroll-row .btn + .btn {
    margin-bottom: 3px;
}

.lower {
    display: flex;
}

.impulse-track {
    flex: none;
    width: 176px;
    height: 328px;
    padding: 5px 12px 4px 11px;
    border-left-width: 0;
    border-bottom: none;
}

.impulse-track h3 {
    padding: 0 0 5px 4px;
}

.impulses {
    width: 151px;
    border: 2px solid;
    border-color: #777 #fff #fff #777;
    border-spacing: 0;
    background: #fff;
    color: #000;
}

.impulses th,
.impulses td {
    font-weight: normal;
    line-height: 18px;
    text-align: center;
    white-space: nowrap;
}

.impulses td:first-child {
    width: 72px;
    padding-right: 8px;
    text-align: right;
}

.decision {
    flex: 1;
    display: flex;
    flex-direction: column;
    align-items: center;
    padding: 85px 8px 5px 6px;
}

.chance {
    width: 300px;
    height: 50px;
    margin: 6px 0 6px 8px;
    padding-top: 2px;
    line-height: 18px;
    text-align: center;
}

.decision .button-row {
    width: 100%;
}

.rules {
    width: 100%;
    height: 110px;
    margin-top: 6px;
    padding: 7px 0 0 10px;
    line-height: 16px;
    white-space: pre;
}

/* ---------- map ---------- */

.map-row {
    flex: 1;
    display: flex;
    margin-left: 27px;
    min-height: 0;
    border-top: 1px solid #222;
}

.map {
    flex: 1;
    min-width: 0;
    height: 100%;
}

.borders path {
    vector-effect: non-scaling-stroke;
}

.map-edge {
    width: 16px;
    background: #f0f0f0;
}

.map-grass {
    width: 11px;
    background: var(--grass) var(--texture);
}

.map-rail {
    width: 12px;
    background: linear-gradient(90deg, #000 0 1px, #a0a0a0 1px 3px, #333 3px 5px, #555 5px 7px, #000 7px 8px, #aaa 9px, #777);
}
```
